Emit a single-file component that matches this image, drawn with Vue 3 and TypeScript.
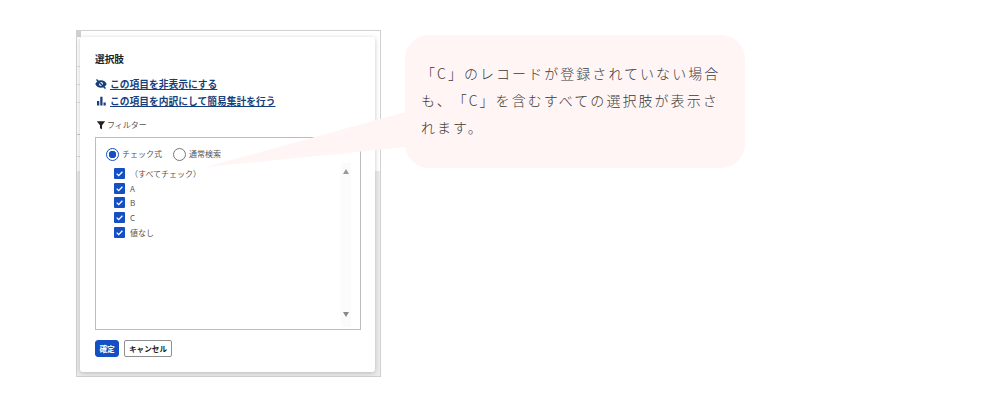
<script setup lang="ts">
const items: string[] = ['（すべてチェック）', 'A', 'B', 'C', '値なし']
</script>

<template>
  <div class="page">
    <div class="frame">
      <div class="card">
        <div class="title">選択肢</div>
        <div class="links">
          <a class="link">
            <svg class="ico" viewBox="0 0 24 24" width="12" height="12"><path fill="#173f7e" d="M12 4.500C6.800 4.500 2.400 7.600.600 12c1.800 4.400 6.200 7.500 11.400 7.500s9.600-3.100 11.400-7.500C21.600 7.600 17.200 4.500 12 4.500zm0 11.500a4 4 0 1 1 0-8 4 4 0 0 1 0 8z"/><path stroke="#173f7e" stroke-width="3" d="M3 3l18 18"/></svg>
            <span>この項目を非表示にする</span>
          </a>
          <a class="link">
            <svg class="ico" viewBox="0 0 24 24" width="12" height="12"><path fill="#173f7e" d="M4 12h4.500v9H4zM10.500 3.500H15V21h-4.500zM17 15h4.500v6H17z"/></svg>
            <span>この項目を内訳にして簡易集計を行う</span>
          </a>
        </div>
        <div class="filter">
          <svg viewBox="0 0 24 24" width="10" height="10"><path fill="#222" d="M2 3h20l-7.500 9.500V22l-5-2v-7.500z"/></svg>
          <span>フィルター</span>
        </div>
        <div class="box">
          <div class="radios">
            <label class="radio"><i class="dot on"></i><span>チェック式</span></label>
            <label class="radio"><i class="dot"></i><span>通常検索</span></label>
          </div>
          <div class="listwrap">
            <ul class="list">
              <li v-for="item in items" :key="item" class="row">
                <svg class="check" viewBox="0 0 11 11" width="11" height="11"><rect width="11" height="11" rx="1" fill="#1450c4"/><path d="M2.700 5.600l2 2 3.700-3.900" fill="none" stroke="#fff" stroke-width="1.300"/></svg>
                <span>{{ item }}</span>
              </li>
            </ul>
            <div class="scroll">
              <i class="arrow up"></i>
              <i class="arrow down"></i>
            </div>
          </div>
        </div>
        <div class="btns">
          <button class="btn primary">確定</button>
          <button class="btn">キャンセル</button>
        </div>
      </div>
    </div>
    <div class="callout">
      「C」のレコードが登録されていない場合も、「C」を含むすべての選択肢が表示されます。
    </div>
    <svg class="tail" viewBox="0 0 991 404" width="991" height="404"><path d="M206 167L406 112V147z" fill="#fff5f4"/></svg>
  </div>
</template>

<style>
html, body { margin: 0; background: #fff; }
</style>

<style scoped>
.page {
  position: relative;
  width: 991px;
  height: 404px;
  box-sizing: border-box;
  padding: 30px 0 0 76px;
  display: flex;
  align-items: flex-start;
  font-family: "Noto Sans CJK JP", "Noto Sans", sans-serif;
  color: #333;
  overflow: hidden;
}
.frame {
  width: 305px;
  height: 347px;
  box-sizing: border-box;
  border: 1.500px solid #d0d0d0;
  padding: 6px 5px 4px 3px;
  background:
    linear-gradient(#cfcfcf, #cfcfcf) 0 0 / 4px 6px no-repeat,
    linear-gradient(#e2e2e2, #e2e2e2) 0 35px / 4px 1px no-repeat,
    linear-gradient(#e2e2e2, #e2e2e2) 0 53px / 4px 1px no-repeat,
    linear-gradient(#e2e2e2, #e2e2e2) 0 71px / 4px 1px no-repeat,
    linear-gradient(#c8c8c8, #c8c8c8) 0 103px / 4px 1px no-repeat,
    linear-gradient(#dcdcdc, #dcdcdc) 0 125px / 4px 1px no-repeat,
    linear-gradient(#ebebeb, #ebebeb) 0 140px / 100% 100% no-repeat,
    #fff;
}
.card {
  width: 295px;
  height: 335px;
  box-sizing: border-box;
  background: #fff;
  border-radius: 3px;
  box-shadow: 0 1px 5px rgba(0, 0, 0, .22);
  padding: 15px 14px 0 15px;
}
.title {
  font-size: 9.700px;
  font-weight: 700;
  line-height: 14px;
  color: #222;
}
.links {
  margin-top: 11px;
  display: flex;
  flex-direction: column;
  gap: 3px;
}
.link {
  display: flex;
  align-items: center;
  gap: 3px;
  font-size: 9.750px;
  font-weight: 700;
  line-height: 14px;
  color: #173f7e;
}
.link span { text-decoration: underline; }
.ico { flex: none; }
.filter {
  margin-top: 10px;
  display: flex;
  align-items: center;
  margin-left: 1px;
  gap: 1px;
  font-size: 8px;
  line-height: 14px;
  color: #555;
}
.box {
  margin-top: 5px;
  width: 266px;
  height: 193px;
  box-sizing: border-box;
  border: 1.500px solid #bcbcbc;
  padding: 9px 8px 0 10px;
}
.radios {
  display: flex;
  align-items: center;
  gap: 11px;
  font-size: 8px;
  line-height: 14px;
  color: #555;
}
.radio {
  display: flex;
  align-items: center;
  gap: 3px;
}
.dot {
  width: 13px;
  height: 13px;
  box-sizing: border-box;
  border: 1.200px solid #777;
  border-radius: 50%;
  background: #fff;
}
.dot.on {
  border-color: #1450c4;
  background: radial-gradient(circle, #1450c4 0 3.500px, #fff 4px);
}
.listwrap {
  display: flex;
  justify-content: space-between;
  margin-top: 2px;
}
.list {
  list-style: none;
  margin: 0;
  padding: 3px 0 0 8px;
}
.row {
  display: flex;
  align-items: center;
  gap: 5px;
  height: 14.700px;
  font-size: 8px;
  color: #555;
}
.check { flex: none; }
.scroll {
  width: 10px;
  height: 164px;
  margin-right: 1px;
  background: #fbfbfb;
  display: flex;
  flex-direction: column;
  justify-content: space-between;
  align-items: center;
  padding: 6px 0 10px;
  box-sizing: border-box;
}
.arrow {
  width: 0;
  height: 0;
  border-left: 3.500px solid transparent;
  border-right: 3.500px solid transparent;
}
.arrow.up { border-bottom: 5px solid #999; }
.arrow.down { border-top: 5px solid #888; }
.btns {
  margin-top: 10px;
  display: flex;
  gap: 5px;
}
.btn {
  height: 17px;
  width: 48px;
  padding: 0;
  box-sizing: border-box;
  border: 1px solid #8f8f8f;
  border-radius: 2px;
  background: #fff;
  color: #222;
  font-family: inherit;
  font-size: 7.600px;
  font-weight: 700;
  line-height: 1;
  white-space: nowrap;
}
.btn.primary {
  width: 24px;
  border-radius: 3px;
  background: #1450c4;
  border-color: #1450c4;
  color: #fff;
}
.callout {
  position: relative;
  z-index: 2;
  margin: 5px 0 0 24px;
  width: 340px;
  height: 133px;
  box-sizing: border-box;
  padding: 25px 16px 0;
  border-radius: 24px;
  background: #fff5f4;
  font-size: 14px;
  font-weight: 300;
  letter-spacing: 2.050px;
  line-height: 27px;
  color: #3a3a3a;
  text-spacing-trim: space-all;
  font-feature-settings: "chws" 0, "palt" 0;
}
.tail {
  position: absolute;
  left: 0;
  top: 0;
  pointer-events: none;
}
</style>
